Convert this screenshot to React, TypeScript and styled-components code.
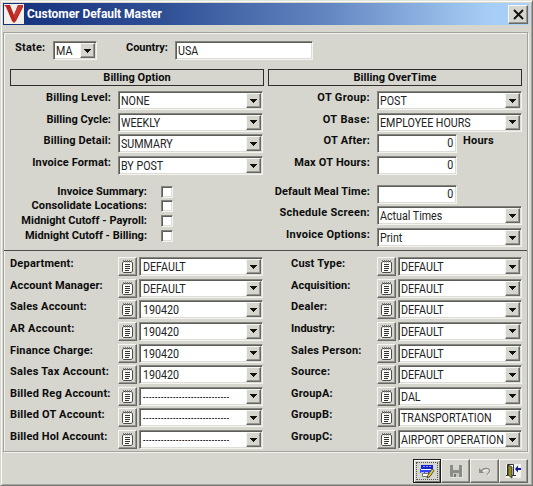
import React from "react";
import styled, { createGlobalStyle, css } from "styled-components";

const Global = createGlobalStyle`
  *, *::before, *::after { box-sizing: border-box; }
  body { margin: 0; background: #d6d6ce; overflow: hidden; }
`;

const face = "#d6d6ce";

const sunken = css`
  border: 1px solid;
  border-color: #85857f #f4f4ef #f4f4ef #85857f;
  box-shadow: inset 1px 1px 0 #5c5c59, inset -1px -1px 0 #dddcd6;
`;

const raised = css`
  border: 1px solid;
  border-color: #f6f6f2 #686864 #686864 #f6f6f2;
  box-shadow: inset -1px -1px 0 #969690;
`;

const Window = styled.div`
  width: 533px;
  height: 486px;
  padding: 2px 3px 1px 2px;
  display: flex;
  flex-direction: column;
  background: ${face};
  border: 1px solid;
  border-color: #e4e4de #777773 #777773 #d6d6ce;
  box-shadow: inset 1px 1px 0 #fbfbf8, inset -1px -1px 0 #a6a6a0;
  font-family: Roboto, "Liberation Sans", sans-serif;
  font-size: 11px;
  color: #0c0c0c;
  white-space: nowrap;
`;

const TitleBar = styled.header`
  height: 22px;
  flex: none;
  display: flex;
  align-items: center;
  padding: 0 1px 0 1px;
  background: linear-gradient(90deg, #14307c 0%, #2f4f95 30%, #6487c2 62%, #a6cdf5 92%, #a9d0f7 100%);
`;

const Title = styled.h1`
  margin: 0 auto 0 3px;
  font-size: 12px;
  line-height: 20px;
  font-weight: 700;
  color: #fff;
  letter-spacing: -0.03px;
`;

const CloseButton = styled.button`
  ${raised}
  width: 20px;
  height: 19px;
  padding: 0;
  display: grid;
  place-items: center;
  background: ${face};
`;

const Panel = styled.main`
  margin: 7px 1px 0 0;
  height: 420px;
  flex: none;
  border: 1px solid #a3a39e;
  box-shadow: inset 1px 1px 0 #f3f3ee, 1px 1px 0 #f3f3ee;
`;

const Identity = styled.div`
  display: flex;
  height: 36px;
  padding: 8px 0 0 11px;
`;

const Label = styled.span<{ $ls?: number }>`
  font-weight: 700;
  font-size: 11px;
  line-height: 13px;
  letter-spacing: ${(p) => p.$ls ?? 0.2}px;
`;

const Headings = styled.div`
  display: grid;
  grid-template-columns: 254px 254px;
  column-gap: 4px;
  padding-left: 6px;
`;

const Heading = styled.h2`
  margin: 0;
  height: 17px;
  border: 1px solid #2e2e2d;
  font-size: 11px;
  line-height: 15px;
  letter-spacing: 0.05px;
  text-align: center;
`;

const Columns = styled.div`
  display: grid;
  grid-template-columns: 259px 259px;
`;

const Settings = styled.section`
  height: 164px;
  padding-top: 5px;
`;

const Row = styled.div<{ $gap?: number }>`
  display: grid;
  grid-template-columns: 107px 146px;
  column-gap: 7px;
  height: 21.7px;
  margin-top: ${(p) => p.$gap ?? 0}px;
  & > ${Label} { justify-self: end; }
`;

const Field = styled.div<{ $w: number; $right?: boolean }>`
  ${sunken}
  width: ${(p) => p.$w}px;
  height: 19px;
  flex: none;
  display: flex;
  background: #fff;
  justify-content: ${(p) => (p.$right ? "flex-end" : "space-between")};
  padding: 1px ${(p) => (p.$right ? 2 : 1)}px 1px 2px;
`;

const Value = styled.span<{ $indent?: number }>`
  width: 0;
  margin-left: ${(p) => p.$indent ?? 0}px;
  font-size: 12px;
  line-height: 16px;
  color: #222;
  transform: scaleX(0.89);
  transform-origin: left;
`;

const Dashes = styled.span`
  font-family: "Liberation Sans", sans-serif;
  font-size: 8px;
  font-weight: 700;
  letter-spacing: 0.7px;
  vertical-align: 2px;
  line-height: 1;
  color: #000;
`;

const Digit = styled.span`
  font-size: 12px;
  line-height: 15px;
  color: #222;
  transform: scaleX(0.89);
`;

const Arrow = styled.span`
  ${raised}
  width: 15px;
  height: 15px;
  display: grid;
  place-items: center;
  background: ${face};
  z-index: 1;
`;

const WithUnit = styled.div`
  display: flex;
  gap: 6px;
`;

const Checks = styled.div`
  margin-top: 7px;
`;

const CheckRow = styled.label`
  display: grid;
  grid-template-columns: 143px 12px;
  column-gap: 14px;
  height: 14.6px;
  & > ${Label} { justify-self: end; }
`;

const Box = styled.span`
  ${sunken}
  width: 12px;
  height: 12px;
  margin-top: 1px;
  background: #fff;
`;

const Accounts = styled(Columns)`
  border-top: 1px solid #4b4b48;
  grid-template-columns: 281px 237px;
  padding: 6px 0 0 6px;
`;

const AccountRow = styled.div<{ $label: number }>`
  display: grid;
  grid-template-columns: ${(p) => p.$label}px 19px 124px;
  column-gap: 2px;
  height: 21.65px;
`;

const NoteButton = styled.button`
  ${raised}
  width: 19px;
  height: 19px;
  padding: 0;
  display: grid;
  place-items: center;
  background: ${face};
`;

const Toolbar = styled.footer`
  display: flex;
  justify-content: flex-end;
  padding: 7px 1px 0 0;
`;

const ToolButton = styled.button<{ $focus?: boolean }>`
  ${raised}
  width: ${(p) => (p.$focus ? 28 : 29)}px;
  height: 24px;
  padding: 0;
  display: grid;
  place-items: center;
  background: ${face};
  ${(p) =>
    p.$focus &&
    css`
      border-color: #1b1b1b;
      box-shadow: inset 1px 1px 0 #fff, inset -1px -1px 0 #777;
      outline: 1px dotted #555;
      outline-offset: -4px;
    `}
`;

const CountryLabel = styled(Label)`
  width: 45px;
  margin: 0 4px 0 29px;
`;
const StateLabel = styled(Label)`
  width: 38px;
`;

const Combo = ({ w, children, indent }: { w: number; children: React.ReactNode; indent?: number }) => (
  <Field $w={w}>
    <Value $indent={indent}>{children}</Value>
    <Arrow>
      <svg width="7" height="4" shapeRendering="crispEdges">
        <path d="M0 0h7v1H6v1H5v1H4v1H3V3H2V2H1V1H0z" fill="#111" />
      </svg>
    </Arrow>
  </Field>
);

const NoteIcon = () => (
  <svg width="13" height="15" viewBox="0 0 13 15">
    <path d="M1.500 3.500v9l1 1h7.500l1.500-1v-9l-1-1h-8z" fill="#fbfbf8" stroke="#4a4a48" />
    <path d="M2.500 1v2.500M4.500 1v2.500M6.500 1v2.500M8.500 1v2.500M10.500 1v2.500" stroke="#777" />
    <path d="M4 5.500h5M4 7.500h5M4 9.500h5M4 11.500h4" stroke="#333" />
  </svg>
);

const LogoIcon = () => (
  <svg width="20" height="20" viewBox="0 0 20 20">
    <path d="M0 0h20v20H0z" fill="#f2eee8" />
    <path d="M0 1h6l4 10 4-10h5v2l-7 14-2 2-2-2L2 3z" fill="#b9261f" />
    <path d="M10 11l4-10h5l-8 15z" fill="#c8372d" />
  </svg>
);

const EditIcon = () => (
  <svg width="16" height="15" viewBox="0 0 16 15">
    <path d="M2 1h12v4H2z" fill="#1523c9" />
    <path d="M4 2.500h8" stroke="#8f9cf7" strokeDasharray="2 1" />
    <path d="M1 5h12v4H1z" fill="#3046ff" />
    <path d="M2 5.500h11" stroke="#fff" />
    <path d="M2 8.500h9" stroke="#b9c3ff" strokeDasharray="3 1" />
    <path d="M3.500 9.500h7v3h-7z" fill="#fff" stroke="#555" strokeWidth=".8" />
    <path d="M13 5l-4 6-1 3 3-1.500 4-6z" fill="#e8cf28" stroke="#333" strokeWidth=".8" />
  </svg>
);

const SaveIcon = () => (
  <svg width="14" height="14" viewBox="0 0 14 14">
    <path d="M2 14h12V2" fill="none" stroke="#f3f3ee" />
    <path d="M1 1h12v12H2l-1-1z" fill="#8b8b87" />
    <path d="M4 1h6v5H4z" fill="#d6d6ce" />
    <path d="M4 9h6v4H4z" fill="#c7c7c1" />
    <path d="M5 10h2v3H5z" fill="#777" />
  </svg>
);

const UndoIcon = () => (
  <svg width="13" height="10" viewBox="0 0 13 10" fill="none">
    <path d="M3 6c2-4 8-4 8-.5C11 7 10 8 9 8.500" stroke="#fff" transform="translate(1 1)" />
    <path d="M3 5.500c2-4 8.500-4 8.500-.5C11.500 7 10 8 9 8.500" stroke="#8b8b87" strokeWidth="1.200" />
    <path d="M1 2v5h5z" fill="#8b8b87" />
  </svg>
);

const ExitIcon = () => (
  <svg width="17" height="17" viewBox="0 0 17 17">
    <path d="M1 1h15v14H1z" fill="#f3f3ef" />
    <path d="M2.500 12V1.500h6V13" fill="#fff" stroke="#333" />
    <path d="M3 2l4 2v11l-4-3z" fill="#8f8b22" stroke="#222" strokeWidth=".8" />
    <path d="M1 12.500h2M7 12.500h4" stroke="#333" />
    <path d="M10 6l3-3.500V5h3v2h-3v2.500z" fill="#17179c" />
  </svg>
);

type Entry = { name: string; value: string; ls?: number };

const billing: Entry[] = [
  { name: "Billing Level:", value: "NONE", ls: 0.13 },
  { name: "Billing Cycle:", value: "WEEKLY", ls: 0.03 },
  { name: "Billing Detail:", value: "SUMMARY", ls: 0.13 },
  { name: "Invoice Format:", value: "BY POST", ls: 0.13 },
];
const checks = [
  { name: "Invoice Summary:", ls: 0.05 },
  { name: "Consolidate Locations:", ls: 0.1 },
  { name: "Midnight Cutoff - Payroll:", ls: 0.03 },
  { name: "Midnight Cutoff - Billing:", ls: 0.01 },
];
const blank = "-".repeat(29);
const accounts: Entry[] = [
  { name: "Department:", value: "DEFAULT" },
  { name: "Account Manager:", value: "DEFAULT", ls: 0.13 },
  { name: "Sales Account:", value: "190420" },
  { name: "AR Account:", value: "190420", ls: 0.3 },
  { name: "Finance Charge:", value: "190420" },
  { name: "Sales Tax Account:", value: "190420", ls: 0.28 },
  { name: "Billed Reg Account:", value: blank, ls: 0.2 },
  { name: "Billed OT Account:", value: blank },
  { name: "Billed Hol Account:", value: blank, ls: 0.16 },
];
const groups: Entry[] = [
  { name: "Cust Type:", value: "DEFAULT" },
  { name: "Acquisition:", value: "DEFAULT", ls: 0.03 },
  { name: "Dealer:", value: "DEFAULT" },
  { name: "Industry:", value: "DEFAULT", ls: 0 },
  { name: "Sales Person:", value: "DEFAULT" },
  { name: "Source:", value: "DEFAULT" },
  { name: "GroupA:", value: "DAL" },
  { name: "GroupB:", value: "TRANSPORTATION" },
  { name: "GroupC:", value: "AIRPORT OPERATION" },
];

const AccountList = ({ rows, label, indent }: { rows: Entry[]; label: number; indent?: number }) => (
  <div>
    {rows.map(({ name, value, ls }) => (
      <AccountRow key={name} $label={label}>
        <Label $ls={ls}>{name}</Label>
        <NoteButton><NoteIcon /></NoteButton>
        <Combo w={124} indent={indent}>{value === blank ? <Dashes>{value}</Dashes> : value}</Combo>
      </AccountRow>
    ))}
  </div>
);

export default function App() {
  return (
    <>
      <Global />
      <Window>
        <TitleBar>
          <LogoIcon />
          <Title>Customer Default Master</Title>
          <CloseButton>
            <svg width="11" height="11" viewBox="0 0 11 11">
              <path d="M1 1l9 9M10 1l-9 9" stroke="#111" strokeWidth="1.900" />
            </svg>
          </CloseButton>
        </TitleBar>
        <Panel>
          <Identity>
            <StateLabel>State:</StateLabel>
            <Combo w={44}>MA</Combo>
            <CountryLabel $ls={-0.05}>Country:</CountryLabel>
            <Field $w={138}><Value>USA</Value></Field>
          </Identity>
          <Headings>
            <Heading>Billing Option</Heading>
            <Heading>Billing OverTime</Heading>
          </Headings>
          <Columns>
            <Settings>
              {billing.map(({ name, value, ls }) => (
                <Row key={name}>
                  <Label $ls={ls}>{name}</Label>
                  <Combo w={145}>{value}</Combo>
                </Row>
              ))}
              <Checks>
                {checks.map(({ name, ls }) => (
                  <CheckRow key={name}>
                    <Label $ls={ls}>{name}</Label>
                    <Box />
                  </CheckRow>
                ))}
              </Checks>
            </Settings>
            <Settings>
              <Row><Label $ls={0.35}>OT Group:</Label><Combo w={145}>POST</Combo></Row>
              <Row><Label $ls={0.4}>OT Base:</Label><Combo w={145}>EMPLOYEE HOURS</Combo></Row>
              <Row>
                <Label>OT After:</Label>
                <WithUnit><Field $w={80} $right><Digit>0</Digit></Field><Label>Hours</Label></WithUnit>
              </Row>
              <Row><Label>Max OT Hours:</Label><Field $w={80} $right><Digit>0</Digit></Field></Row>
              <Row $gap={7}><Label $ls={0.1}>Default Meal Time:</Label><Field $w={80} $right><Digit>0</Digit></Field></Row>
              <Row><Label $ls={0.28}>Schedule Screen:</Label><Combo w={145}>Actual Times</Combo></Row>
              <Row><Label $ls={0.25}>Invoice Options:</Label><Combo w={145}>Print</Combo></Row>
            </Settings>
          </Columns>
          <Accounts>
            <AccountList rows={accounts} label={106} indent={1} />
            <AccountList rows={groups} label={84} />
          </Accounts>
        </Panel>
        <Toolbar>
          <ToolButton $focus><EditIcon /></ToolButton>
          <ToolButton><SaveIcon /></ToolButton>
          <ToolButton><UndoIcon /></ToolButton>
          <ToolButton><ExitIcon /></ToolButton>
        </Toolbar>
      </Window>
    </>
  );
}
